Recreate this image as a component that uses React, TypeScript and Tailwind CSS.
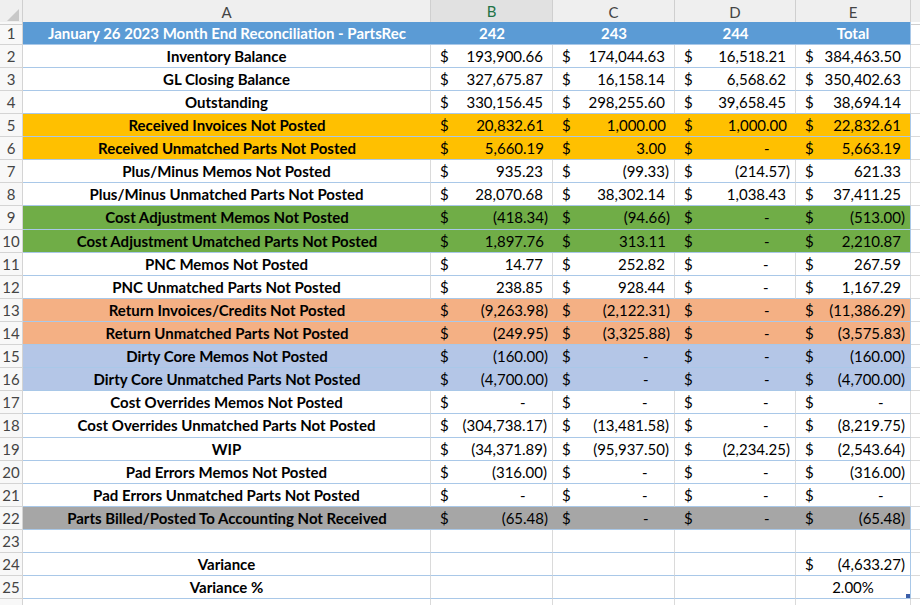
import React from "react";

type Row = {
  label: string;
  vals?: string[];
  bg?: string;
};

const rows: Row[] = [
  { label: "Inventory Balance", vals: ["193,900.66", "174,044.63", "16,518.21", "384,463.50"] },
  { label: "GL Closing Balance", vals: ["327,675.87", "16,158.14", "6,568.62", "350,402.63"] },
  { label: "Outstanding", vals: ["330,156.45", "298,255.60", "39,658.45", "38,694.14"] },
  { label: "Received Invoices Not Posted", vals: ["20,832.61", "1,000.00", "1,000.00", "22,832.61"], bg: "bg-[#ffc000]" },
  { label: "Received Unmatched Parts Not Posted", vals: ["5,660.19", "3.00", "-", "5,663.19"], bg: "bg-[#ffc000]" },
  { label: "Plus/Minus Memos Not Posted", vals: ["935.23", "(99.33)", "(214.57)", "621.33"] },
  { label: "Plus/Minus Unmatched Parts Not Posted", vals: ["28,070.68", "38,302.14", "1,038.43", "37,411.25"] },
  { label: "Cost Adjustment Memos Not Posted", vals: ["(418.34)", "(94.66)", "-", "(513.00)"], bg: "bg-[#70ad47]" },
  { label: "Cost Adjustment Umatched Parts Not Posted", vals: ["1,897.76", "313.11", "-", "2,210.87"], bg: "bg-[#70ad47]" },
  { label: "PNC Memos Not Posted", vals: ["14.77", "252.82", "-", "267.59"] },
  { label: "PNC Unmatched Parts Not Posted", vals: ["238.85", "928.44", "-", "1,167.29"] },
  { label: "Return Invoices/Credits Not Posted", vals: ["(9,263.98)", "(2,122.31)", "-", "(11,386.29)"], bg: "bg-[#f4b084]" },
  { label: "Return Unmatched Parts Not Posted", vals: ["(249.95)", "(3,325.88)", "-", "(3,575.83)"], bg: "bg-[#f4b084]" },
  { label: "Dirty Core Memos Not Posted", vals: ["(160.00)", "-", "-", "(160.00)"], bg: "bg-[#b4c6e7]" },
  { label: "Dirty Core Unmatched Parts Not Posted", vals: ["(4,700.00)", "-", "-", "(4,700.00)"], bg: "bg-[#b4c6e7]" },
  { label: "Cost Overrides Memos Not Posted", vals: ["-", "-", "-", "-"] },
  { label: "Cost Overrides Unmatched Parts Not Posted", vals: ["(304,738.17)", "(13,481.58)", "-", "(8,219.75)"] },
  { label: "WIP", vals: ["(34,371.89)", "(95,937.50)", "(2,234.25)", "(2,543.64)"] },
  { label: "Pad Errors Memos Not Posted", vals: ["(316.00)", "-", "-", "(316.00)"] },
  { label: "Pad Errors Unmatched Parts Not Posted", vals: ["-", "-", "-", "-"] },
  { label: "Parts Billed/Posted To Accounting Not Received", vals: ["(65.48)", "-", "-", "(65.48)"], bg: "bg-[#a6a6a6]" },
];

const cols = "grid grid-cols-[23px_408px_122px_122px_121px_115px_1fr]";
const line = "border-b border-[#a9c8e8] flex items-center";

// rows 9 and 18 are a pixel taller, as Excel rounds its row heights
const rowH = (n: number) => (n === 9 || n === 18 ? "h-[24px]" : "h-[23px]");

function Money({ v }: { v?: string }) {
  if (!v) return null;
  const neg = v.startsWith("(");
  return (
    <div className="flex w-full items-center justify-between pl-[9px] pr-[5px]">
      <span>$</span>
      <span>
        {v === "-" ? (
          <>
            -<span className="invisible">00)</span>
          </>
        ) : neg ? (
          v
        ) : (
          <>
            {v}
            <span className="invisible">)</span>
          </>
        )}
      </span>
    </div>
  );
}

function RowNum({ n }: { n: number }) {
  return (
    <div className={`${rowH(n)} border-b border-r border-[#d4d4d4] bg-[#f8f8f8] flex items-center justify-center text-[15px] text-[#444]`}>
      {n}
    </div>
  );
}

export default function App() {
  return (
    <div
      className="h-[605px] w-[920px] overflow-hidden bg-white text-[15px] text-black"
      style={{ fontFamily: "Lato, 'Open Sans', sans-serif" }}
    >
      {/* column letters */}
      <div className={`${cols} h-[22px] bg-[#efefef] text-[15px] text-[#444]`}>
        <div className="relative border-r border-b border-[#cfcfcf]">
          <svg className="absolute bottom-[3px] right-[3px]" width="12" height="12" viewBox="0 0 12 12">
            <polygon points="12,0 12,12 0,12" fill="#c8c8c8" />
          </svg>
        </div>
        <div className="flex items-center justify-center border-r border-b border-[#cfcfcf]">A</div>
        <div className="flex items-center justify-center border-r border-b-2 border-b-[#217346] border-r-[#cfcfcf] bg-[#e1e1e1] text-[#217346]">B</div>
        <div className="flex items-center justify-center border-r border-b border-[#cfcfcf]">C</div>
        <div className="flex items-center justify-center border-r border-b border-[#cfcfcf]">D</div>
        <div className="flex items-center justify-center border-r border-b border-[#cfcfcf]">E</div>
        <div className="border-b border-[#cfcfcf]" />
      </div>

      {/* title row */}
      <div className={cols}>
        <RowNum n={1} />
        <div className={`h-[23px] ${line} justify-center bg-[#5b9bd5] font-bold text-white`}>
          January 26 2023 Month End Reconciliation - PartsRec
        </div>
        <div className={`h-[23px] ${line} justify-center bg-[#5b9bd5] font-bold text-white`}>242</div>
        <div className={`h-[23px] ${line} justify-center bg-[#5b9bd5] font-bold text-white`}>243</div>
        <div className={`h-[23px] ${line} justify-center bg-[#5b9bd5] font-bold text-white`}>244</div>
        <div className={`h-[23px] ${line} justify-center border-r bg-[#5b9bd5] font-bold text-white`}>Total</div>
        <div className="h-[23px] border-b border-[#dadada]" />
      </div>

      {rows.map((r, i) => {
        const n = i + 2;
        const h = rowH(n);
        const fill = r.bg ?? "bg-white border-r border-r-[#dadada]";
        return (
          <div key={r.label} className={cols}>
            <RowNum n={n} />
            <div className={`${h} ${line} justify-center font-bold ${fill}`}>{r.label}</div>
            {r.vals!.map((v, j) => (
              <div
                key={j}
                className={`${h} ${line} ${fill} ${j === 3 ? "border-r border-r-[#a9c8e8]" : ""}`}
              >
                <Money v={v} />
              </div>
            ))}
            <div className={`${h} border-b border-[#dadada]`} />
          </div>
        );
      })}

      {/* 23 blank */}
      <div className={cols}>
        <RowNum n={23} />
        <div className={`h-[23px] ${line} border-r border-r-[#dadada]`} />
        <div className={`h-[23px] ${line} border-r border-r-[#dadada]`} />
        <div className={`h-[23px] ${line} border-r border-r-[#dadada]`} />
        <div className={`h-[23px] ${line} border-r border-r-[#dadada]`} />
        <div className={`h-[23px] ${line} border-r border-r-[#a9c8e8]`} />
        <div className="h-[23px] border-b border-[#dadada]" />
      </div>

      {/* 24 variance */}
      <div className={cols}>
        <RowNum n={24} />
        <div className={`h-[23px] ${line} justify-center border-r border-r-[#dadada] font-bold`}>Variance</div>
        <div className={`h-[23px] ${line} border-r border-r-[#dadada]`} />
        <div className={`h-[23px] ${line} border-r border-r-[#dadada]`} />
        <div className={`h-[23px] ${line} border-r border-r-[#dadada]`} />
        <div className={`h-[23px] ${line} border-r border-r-[#a9c8e8]`}>
          <Money v="(4,633.27)" />
        </div>
        <div className="h-[23px] border-b border-[#dadada]" />
      </div>

      {/* 25 variance % */}
      <div className={cols}>
        <RowNum n={25} />
        <div className={`h-[23px] ${line} justify-center border-r border-r-[#dadada] font-bold`}>Variance %</div>
        <div className={`h-[23px] ${line} border-r border-r-[#dadada]`} />
        <div className={`h-[23px] ${line} border-r border-r-[#dadada]`} />
        <div className={`h-[23px] ${line} border-r border-r-[#dadada]`} />
        <div className={`h-[23px] ${line} relative justify-center border-r border-r-[#a9c8e8]`}>
          2.00%
          <span className="absolute bottom-0 right-0 h-[4px] w-[4px] bg-[#3b5ea8]" />
        </div>
        <div className="h-[23px] border-b border-[#dadada]" />
      </div>

      {/* 26 partial */}
      <div className={cols}>
        <div className="h-[23px] border-r border-[#d4d4d4] bg-[#f8f8f8]" />
        <div className="h-[23px] border-r border-[#dadada]" />
        <div className="h-[23px] border-r border-[#dadada]" />
        <div className="h-[23px] border-r border-[#dadada]" />
        <div className="h-[23px] border-r border-[#dadada]" />
        <div className="h-[23px] border-r border-[#dadada]" />
        <div />
      </div>
    </div>
  );
}
